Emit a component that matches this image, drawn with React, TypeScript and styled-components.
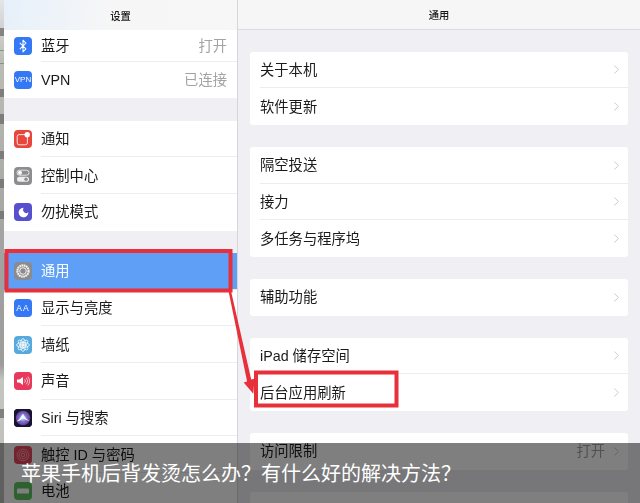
import React from "react";
import styled, { createGlobalStyle } from "styled-components";
import { Bluetooth, Moon, ChevronRight } from "lucide-react";

const GlobalStyle = createGlobalStyle`
  html, body {
    margin: 0;
    padding: 0;
    background: #efeff4;
  }
  * {
    box-sizing: border-box;
  }
`;

const Page = styled.div`
  position: relative;
  width: 640px;
  height: 503px;
  overflow: hidden;
  font-family: "Liberation Sans", "Noto Sans CJK SC", sans-serif;
  color: #1a1a1a;
`;

const Screen = styled.div`
  display: grid;
  grid-template-columns: 4px 234px 1fr;
  height: 100%;
  filter: blur(0.5px);
`;

const BackdropStrip = styled.div`
  display: flex;
  flex-direction: column;
  overflow: hidden;
  background: linear-gradient(180deg, #e4e5e6 0, #bcbcb7 60px, #a3a3a1 240px, #9c9c9b 365px, #c4c4c1 380px, #bdbdba 100%);
`;

const BackdropMark = styled.span<{ $gap: number; $height: number; $tint?: string }>`
  display: block;
  flex: none;
  margin-top: ${(p) => p.$gap}px;
  height: ${(p) => p.$height}px;
  background: ${(p) => p.$tint ?? "#6b6b6b"};
  opacity: 0.75;
`;

const Sidebar = styled.aside`
  background: #efeff4;
  border-right: 1px solid #d6d6da;
  overflow: hidden;
`;

const SidebarHeader = styled.header`
  height: 30px;
  display: flex;
  align-items: flex-end;
  justify-content: center;
  padding-bottom: 7px;
  font-size: 10.3px;
  font-weight: 500;
  line-height: 12px;
  background: linear-gradient(100deg, #e6f0fa 0, #f6f6f7 45%, #f7f7f8 100%);
`;

const DetailHeader = styled(SidebarHeader)`
  background: #f6f6f7;
  border-bottom: 1px solid #dcdce0;
`;

const SideGroup = styled.div<{ $gap?: number }>`
  margin-top: ${(p) => p.$gap ?? 0}px;
  background: #fff;
`;

const SideRow = styled.div<{ $active?: boolean; $short?: boolean }>`
  position: relative;
  height: ${(p) => (p.$short ? 31.6 : 36.7)}px;
  display: flex;
  align-items: center;
  padding: 0 10px;
  gap: 9px;
  font-size: 14.3px;
  line-height: 20px;
  background: ${(p) => (p.$active ? "#5f9ff5" : "transparent")};
  color: ${(p) => (p.$active ? "#fff" : "#1a1a1a")};

  &:not(:last-child)::after {
    content: "";
    position: absolute;
    left: 37px;
    right: 0;
    bottom: 0;
    height: 1px;
    background: #ededef;
  }
`;

const IconTile = styled.span<{ $bg: string }>`
  flex: none;
  width: 18px;
  height: 18px;
  border-radius: 4px;
  display: flex;
  align-items: center;
  justify-content: center;
  background: ${(p) => p.$bg};
  color: #fff;
`;

const TileText = styled.span<{ $size: number; $spacing?: number }>`
  font-family: "Liberation Sans", sans-serif;
  font-size: ${(p) => p.$size}px;
  letter-spacing: ${(p) => p.$spacing ?? 0}px;
  line-height: 1;
`;

const Label = styled.span`
  flex: 1;
  white-space: nowrap;
`;

const Value = styled.span`
  color: #a3a3a6;
  white-space: nowrap;
`;

const Detail = styled.main`
  background: #efeff4;
  overflow: hidden;
`;

const DetailBody = styled.div`
  display: flex;
  flex-direction: column;
  gap: 22px;
  padding: 21.5px 12px 0;
`;

const Card = styled.section`
  background: #fff;
  border-radius: 3px;
`;

const CardRow = styled.div`
  position: relative;
  height: 36.7px;
  display: flex;
  align-items: center;
  padding: 0 4.5px 0 10px;
  gap: 3.5px;
  font-size: 14.3px;
  line-height: 20px;

  &:not(:last-child)::after {
    content: "";
    position: absolute;
    left: 10px;
    right: 0;
    bottom: 0;
    height: 1px;
    background: #ededef;
  }
`;

const Chevron = styled(ChevronRight)`
  flex: none;
  color: #c7c7cc;
`;

const Annotations = styled.svg`
  position: absolute;
  inset: 0;
  pointer-events: none;
`;

const Caption = styled.div`
  position: absolute;
  left: 0;
  right: 0;
  bottom: 0;
  height: 60px;
  padding: 17.5px 0 0 21px;
  background: rgba(0, 0, 0, 0.5);
  color: #fff;
  font-family: "Noto Sans CJK SC", sans-serif;
  font-size: 20px;
  line-height: 24px;
  white-space: nowrap;
`;

const GearIcon = () => (
  <svg width="16" height="16" viewBox="0 0 16 16" fill="none">
    <circle cx="8" cy="8" r="5.6" stroke="#f1f1f1" strokeWidth="2.2" strokeDasharray="1.7 0.5" />
    <circle cx="8" cy="8" r="3.3" stroke="#f1f1f1" strokeWidth="1" />
  </svg>
);

const NotifyIcon = () => (
  <svg width="18" height="18" viewBox="0 0 18 18" fill="none">
    <rect x="3.2" y="4.6" width="10.2" height="10.2" rx="2" stroke="#fff" strokeWidth="1" opacity="0.85" />
    <circle cx="13.2" cy="4.8" r="2.7" fill="#fff" />
  </svg>
);

const SwitchesIcon = () => (
  <svg width="18" height="18" viewBox="0 0 18 18" fill="none">
    <rect x="3" y="3.2" width="12" height="5" rx="2.5" stroke="#eee" strokeWidth="0.9" />
    <circle cx="6" cy="5.7" r="2" fill="#fff" />
    <rect x="3" y="9.8" width="12" height="5" rx="2.5" fill="#eee" />
    <circle cx="12" cy="12.3" r="1.7" fill="#8d8d8f" />
  </svg>
);

const FlowerIcon = () => (
  <svg width="16" height="16" viewBox="0 0 16 16" fill="none" stroke="#e8f5fb" strokeWidth="0.9">
    {[0, 45, 90, 135].map((angle) => (
      <ellipse key={angle} cx="8" cy="8" rx="2.5" ry="6.4" transform={`rotate(${angle} 8 8)`} />
    ))}
    <circle cx="8" cy="8" r="1.4" fill="#e8f5fb" />
  </svg>
);

const SoundIcon = () => (
  <svg width="18" height="18" viewBox="0 0 18 18" fill="none">
    <path d="M3 7.4h2.4L9 5v8L5.4 10.6H3z" fill="#fff" />
    <path d="M10.6 7.2a2.6 2.6 0 0 1 0 3.6M12.2 5.8a4.6 4.6 0 0 1 0 6.4M13.8 4.6a6.4 6.4 0 0 1 0 8.8" stroke="#f7c9d2" strokeWidth="0.9" />
  </svg>
);

const SiriIcon = () => (
  <svg width="18" height="18" viewBox="0 0 18 18">
    <defs>
      <radialGradient id="siriGlow" cx="50%" cy="50%" r="55%">
        <stop offset="0" stopColor="#dfe9f5" />
        <stop offset="0.45" stopColor="#6f7fd0" />
        <stop offset="0.8" stopColor="#7a3fa8" />
        <stop offset="1" stopColor="#14162e" />
      </radialGradient>
    </defs>
    <rect width="18" height="18" rx="4" fill="#14162e" />
    <circle cx="9" cy="9" r="7.4" fill="url(#siriGlow)" />
    <path d="M2.6 12.4C6 10.6 7.6 6.6 9 4.6c1 2.6 3.4 6 6.4 7.2-2.6-.4-4.6-1.4-6.2-2.6-1.6 1.4-3.6 2.8-6.6 3.2z" fill="#f2f6fb" />
  </svg>
);

const TouchIcon = () => (
  <svg width="18" height="18" viewBox="0 0 18 18" fill="none" stroke="#f2a9ae" strokeWidth="0.8">
    <circle cx="9" cy="9" r="5.8" />
    <circle cx="9" cy="9" r="3.8" />
    <circle cx="9" cy="9" r="1.8" />
  </svg>
);

const BatteryIcon = () => (
  <svg width="18" height="18" viewBox="0 0 18 18">
    <rect x="3" y="6.4" width="12" height="5.2" rx="1.2" fill="#fff" />
  </svg>
);

const sidebarGroups = [
  {
    gap: 0,
    rows: [
      { label: "蓝牙", value: "打开", bg: "#3478f6", icon: <Bluetooth size={14} strokeWidth={1.8} />, short: true },
      { label: "VPN", value: "已连接", bg: "#3478f6", icon: <TileText $size={8}>VPN</TileText> },
    ],
  },
  {
    gap: 22.4,
    rows: [
      { label: "通知", bg: "#e8453c", icon: <NotifyIcon /> },
      { label: "控制中心", bg: "#8d8d8f", icon: <SwitchesIcon /> },
      { label: "勿扰模式", bg: "#5650cf", icon: <Moon size={13} fill="#fff" strokeWidth={0} /> },
    ],
  },
  {
    gap: 22.2,
    rows: [
      { label: "通用", bg: "#8b8b8d", icon: <GearIcon />, active: true },
      { label: "显示与亮度", bg: "#3478f6", icon: <TileText $size={8.5} $spacing={1}>AA</TileText> },
      { label: "墙纸", bg: "#55a9dc", icon: <FlowerIcon /> },
      { label: "声音", bg: "#e8395c", icon: <SoundIcon /> },
      { label: "Siri 与搜索", bg: "#14162e", icon: <SiriIcon /> },
      { label: "触控 ID 与密码", bg: "#e8455a", icon: <TouchIcon /> },
      { label: "电池", bg: "#5cc060", icon: <BatteryIcon /> },
    ],
  },
];

const detailCards: { label: string; value?: string }[][] = [
  [{ label: "关于本机" }, { label: "软件更新" }],
  [{ label: "隔空投送" }, { label: "接力" }, { label: "多任务与程序坞" }],
  [{ label: "辅助功能" }],
  [{ label: "iPad 储存空间" }, { label: "后台应用刷新" }],
  [{ label: "访问限制", value: "打开" }],
];

// out-of-focus page content showing past the edge of the tablet
const backdropMarks = [
  { gap: 28, height: 8 },
  { gap: 14, height: 1, tint: "#6f8a66" },
  { gap: 12, height: 1, tint: "#6f8a66" },
  { gap: 25, height: 8 },
  { gap: 17, height: 10 },
  { gap: 27, height: 8 },
  { gap: 20, height: 9 },
  { gap: 23, height: 8 },
  { gap: 190, height: 9 },
];

export default function App() {
  return (
    <Page>
      <GlobalStyle />
      <Screen>
        <BackdropStrip>
          {backdropMarks.map((mark, i) => (
            <BackdropMark key={i} $gap={mark.gap} $height={mark.height} $tint={mark.tint} />
          ))}
        </BackdropStrip>

        <Sidebar>
          <SidebarHeader>设置</SidebarHeader>
          {sidebarGroups.map((group, i) => (
            <SideGroup key={i} $gap={group.gap}>
              {group.rows.map((row) => (
                <SideRow key={row.label} $active={"active" in row && row.active} $short={"short" in row && row.short}>
                  <IconTile $bg={row.bg}>{row.icon}</IconTile>
                  <Label>{row.label}</Label>
                  {"value" in row && <Value>{row.value}</Value>}
                </SideRow>
              ))}
            </SideGroup>
          ))}
        </Sidebar>

        <Detail>
          <DetailHeader>通用</DetailHeader>
          <DetailBody>
            {detailCards.map((card, i) => (
              <Card key={i}>
                {card.map((row) => (
                  <CardRow key={row.label}>
                    <Label>{row.label}</Label>
                    {row.value && <Value>{row.value}</Value>}
                    <Chevron size={15} strokeWidth={1.5} />
                  </CardRow>
                ))}
              </Card>
            ))}
            <Card>
              <CardRow />
            </Card>
          </DetailBody>
        </Detail>
      </Screen>

      <Annotations width="640" height="503" viewBox="0 0 640 503">
        <rect x="6.5" y="251" width="224" height="39.5" fill="none" stroke="#e8303a" strokeWidth="4" />
        <rect x="256" y="372.5" width="140.5" height="33" fill="none" stroke="#e8303a" strokeWidth="4" />
        <path d="M228.5 291l2.4-.5 20.3 89 3.3-.8-1.2 15-9.6-11.3 3.4-.8z" fill="#e8303a" />
      </Annotations>

      <Caption>苹果手机后背发烫怎么办？有什么好的解决方法？</Caption>
    </Page>
  );
}
